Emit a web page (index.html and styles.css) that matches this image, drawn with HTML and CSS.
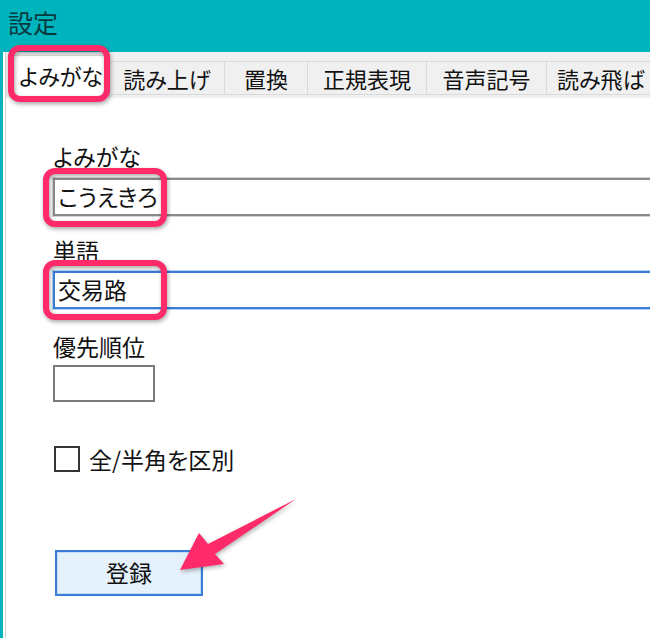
FILE: index.html
```html
<!DOCTYPE html>
<html lang="ja">
<head>
<meta charset="utf-8">
<title>設定</title>
<link rel="stylesheet" href="styles.css">
</head>
<body>
<div class="window">
  <div class="titlebar">設定</div>
  <div class="frame">
    <div class="client">
      <div class="tabs">
        <div class="tab active">よみがな</div>
        <div class="tab">読み上げ</div>
        <div class="tab">置換</div>
        <div class="tab">正規表現</div>
        <div class="tab">音声記号</div>
        <div class="tab last">読み飛ば</div>
      </div>
      <div class="panel">
        <div class="label first">よみがな</div>
        <div class="textbox">こうえきろ</div>
        <div class="label">単語</div>
        <div class="textbox focused">交易路</div>
        <div class="label">優先順位</div>
        <div class="textbox small"></div>
        <div class="check-row">
          <span class="checkbox"></span>
          <span class="check-label">全/半角を区別</span>
        </div>
        <div class="button">登録</div>
      </div>
    </div>
  </div>
  <svg class="annotations" width="650" height="638" viewBox="0 0 650 638">
    <g class="marks">
      <rect x="11" y="48" width="96" height="51" rx="9" />
      <rect x="46" y="171" width="118" height="53" rx="9" />
      <rect x="46" y="263" width="118" height="54" rx="9" />
    </g>
    <path class="arrow" d="M180 570 L199 533 L208 544 L296 499 L215 554 L224 564 Z" />
  </svg>
</div>
</body>
</html>
```
FILE: styles.css
```css
* { box-sizing: border-box; }
html, body {
  margin: 0;
  padding: 0;
  background: #ffffff;
}
body {
  font-family: "Noto Sans CJK JP", "Noto Sans", sans-serif;
  font-feature-settings: "palt";
  color: #111;
}
.window {
  position: relative;
  width: 650px;
  height: 638px;
  overflow: hidden;
  background: #fff;
}
.titlebar {
  height: 52px;
  background: #00b4be;
  color: #0b3a3e;
  font-size: 25px;
  line-height: 30px;
  padding: 7px 0 0 8px;
}
.frame {
  height: 586px;
  border-left: 3px solid #00b4be;
}
.client {
  height: 100%;
  margin-left: 2px;
  border-left: 1px solid #d3d3d3;
}
.tabs {
  height: 46px;
  background: #f0f0f0;
  display: grid;
  grid-template-columns: 98px 115px 83px 119px 120px 105px;
  align-items: end;
  padding: 0 0 3px 6px;
}
.tab {
  height: 34px;
  font-size: 22px;
  line-height: 32px;
  text-align: center;
  white-space: nowrap;
  border: 1px solid #d9d9d9;
  border-left: 0;
  background: #f0f0f0;
}
.tab.last {
  text-align: left;
  padding-left: 10px;
  border-right: 0;
}
.tab.active {
  height: 43px;
  line-height: 38px;
  margin-bottom: -3px;
  background: #ffffff;
  border: 1px solid #d9d9d9;
  border-bottom: 0;
}
.panel {
  background: #fff;
  padding: 44px 0 0 47px;
}
.label {
  font-size: 23px;
  line-height: 28px;
  height: 28px;
  margin-top: 20px;
}
.label.first { margin-top: 0; }
.label + .textbox { margin-top: 8px; }
.label + .textbox.focused { margin-top: 7px; }
.label + .textbox.small { margin-top: 5px; }
.textbox {
  width: 640px;
  height: 38px;
  border: 2px solid #8a8a8a;
  box-shadow: 0 0 0 1px #d4d4d4;
  font-size: 23px;
  line-height: 32px;
  padding-left: 3px;
  white-space: nowrap;
}
.textbox.focused {
  border-color: #3a7dd8;
  box-shadow: 0 0 0 1px #b4cff2;
}
.textbox.focused + .label { margin-top: 23px; }
.textbox.small {
  width: 102px;
  height: 37px;
  border: 2px solid #7a7a7a;
  box-shadow: none;
}
.check-row {
  display: flex;
  align-items: center;
  gap: 9px;
  margin: 44px 0 0 1px;
  height: 26px;
}
.checkbox {
  width: 26px;
  height: 26px;
  border: 2px solid #333;
  background: #fff;
}
.check-label {
  font-size: 23px;
  line-height: 28px;
}
.button {
  width: 148px;
  height: 46px;
  margin: 78px 0 0 2px;
  background: #e5f1fb;
  border: 2px solid #3a7dd8;
  box-shadow: inset 0 0 0 1px #c2dcf5;
  font-size: 23px;
  line-height: 40px;
  text-align: center;
}
.annotations {
  position: absolute;
  left: 0;
  top: 0;
  pointer-events: none;
}
.marks rect {
  fill: none;
  stroke: #fe2a69;
  stroke-width: 6;
  filter: drop-shadow(1px 2px 2px rgba(0, 0, 0, 0.35));
}
.arrow {
  fill: #fe2a69;
  filter: drop-shadow(1px 2px 2px rgba(0, 0, 0, 0.3));
}
```
